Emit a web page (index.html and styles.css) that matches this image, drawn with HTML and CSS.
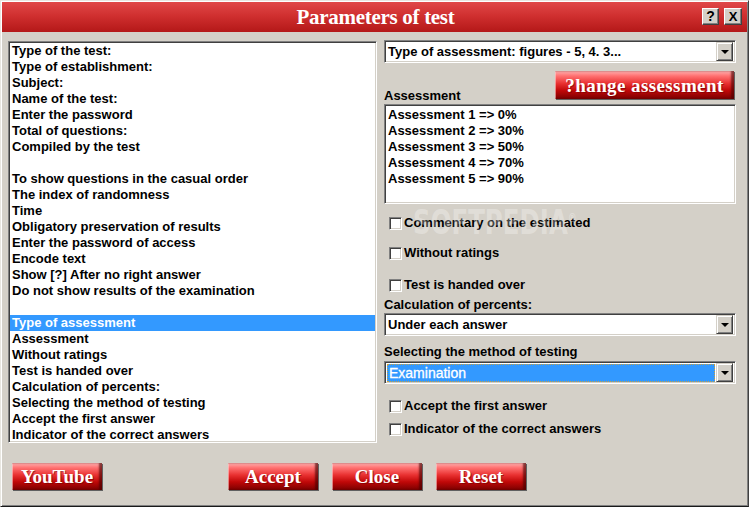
FILE: index.html
```html
<!DOCTYPE html>
<html>
<head>
<meta charset="utf-8">
<link rel="stylesheet" href="styles.css">
</head>
<body>
<div class="window">
  <div class="titlebar">
    <span class="title">Parameters of test</span>
    <div class="tb-buttons">
      <span class="tb-btn">?</span>
      <span class="tb-btn tb-x">X</span>
    </div>
  </div>
  <div class="main">
    <div class="left listbox">
      <div class="li">Type of the test:</div>
      <div class="li">Type of establishment:</div>
      <div class="li">Subject:</div>
      <div class="li">Name of the test:</div>
      <div class="li">Enter the password</div>
      <div class="li">Total of questions:</div>
      <div class="li">Compiled by the test</div>
      <div class="li">&nbsp;</div>
      <div class="li">To show questions in the casual order</div>
      <div class="li">The index of randomness</div>
      <div class="li">Time</div>
      <div class="li">Obligatory preservation of results</div>
      <div class="li">Enter the password of access</div>
      <div class="li">Encode text</div>
      <div class="li">Show [?] After no right answer</div>
      <div class="li">Do not show results of the examination</div>
      <div class="li">&nbsp;</div>
      <div class="li sel">Type of assessment</div>
      <div class="li">Assessment</div>
      <div class="li">Without ratings</div>
      <div class="li">Test is handed over</div>
      <div class="li">Calculation of percents:</div>
      <div class="li">Selecting the method of testing</div>
      <div class="li">Accept the first answer</div>
      <div class="li">Indicator of the correct answers</div>
    </div>
    <div class="right">
      <div class="combo">
        <span class="combo-text">Type of assessment: figures - 5, 4. 3...</span>
        <span class="drop"><span class="arrow"></span></span>
      </div>
      <div class="assess-row">
        <span class="label assess-label">Assessment</span>
        <span class="rbtn change">?hange assessment</span>
      </div>
      <div class="listbox small">
        <div class="li">Assessment 1 =&gt; 0%</div>
        <div class="li">Assessment 2 =&gt; 30%</div>
        <div class="li">Assessment 3 =&gt; 50%</div>
        <div class="li">Assessment 4 =&gt; 70%</div>
        <div class="li">Assessment 5 =&gt; 90%</div>
      </div>
      <div class="check c1"><span class="box"></span>Commentary on the estimated</div>
      <div class="check c2"><span class="box"></span>Without ratings</div>
      <div class="check c3"><span class="box"></span>Test is handed over</div>
      <div class="label l1">Calculation of percents:</div>
      <div class="combo">
        <span class="combo-text">Under each answer</span>
        <span class="drop"><span class="arrow"></span></span>
      </div>
      <div class="label l2">Selecting the method of testing</div>
      <div class="combo c-sel">
        <span class="combo-text focused">Examination</span>
        <span class="drop"><span class="arrow"></span></span>
      </div>
      <div class="check c4"><span class="box"></span>Accept the first answer</div>
      <div class="check c5"><span class="box"></span>Indicator of the correct answers</div>
      <div class="watermark">SOFTPEDIA<sup>®</sup></div>
    </div>
  </div>
  <div class="footer">
    <span class="rbtn fbtn">YouTube</span>
    <span class="rbtn fbtn accept">Accept</span>
    <span class="rbtn fbtn">Close</span>
    <span class="rbtn fbtn">Reset</span>
  </div>
</div>
</body>
</html>
```

FILE: styles.css
```css
html, body {
  margin: 0;
  padding: 0;
  background: #d4d0c8;
}
body {
  width: 749px;
  height: 507px;
  overflow: hidden;
  font-family: "Liberation Sans", Arial, sans-serif;
  font-weight: bold;
  font-size: 13px;
  color: #000;
}
.window {
  box-sizing: border-box;
  width: 749px;
  height: 507px;
  background: #d4d0c8;
  border-style: solid;
  border-width: 1px;
  border-color: #e8e6e0 #404040 #1a1a1a #e8e6e0;
  box-shadow: inset 1px 1px 0 #ffffff, inset -1px -1px 0 #808080;
  display: flex;
  flex-direction: column;
  position: relative;
}
.titlebar {
  height: 30px;
  margin: 1px 1px 0 1px;
  background: linear-gradient(to bottom, #e04848 0%, #d03030 45%, #b41818 100%);
  position: relative;
  display: flex;
  align-items: center;
  justify-content: center;
}
.title {
  font-family: "Liberation Serif", "Times New Roman", serif;
  font-weight: bold;
  font-size: 21px;
  color: #fff;
  letter-spacing: -0.3px;
  margin-left: 2px;
}
.tb-buttons {
  position: absolute;
  right: 5px;
  top: 6px;
  display: flex;
  gap: 5px;
}
.tb-btn {
  box-sizing: border-box;
  width: 17px;
  height: 17px;
  background: #d4d0c8;
  border-style: solid;
  border-width: 1px;
  border-color: #ffffff #404040 #404040 #ffffff;
  box-shadow: inset -1px -1px 0 #808080;
  font-family: "Liberation Sans", Arial, sans-serif;
  font-weight: bold;
  font-size: 14px;
  line-height: 15px;
  text-align: center;
  color: #000;
}
.tb-x {
  width: 18px;
  font-size: 13px;
}
.main {
  display: flex;
  padding: 8px 0 0 7px;
}
.listbox {
  box-sizing: border-box;
  background: #fff;
  border-style: solid;
  border-width: 1px;
  border-color: #808080 #ffffff #ffffff #808080;
  box-shadow: inset 1px 1px 0 #404040, inset -1px -1px 0 #d4d0c8;
  padding: 1px 1px 0 1px;
  overflow: hidden;
}
.li {
  line-height: 16px;
  height: 16px;
  padding-left: 2px;
  white-space: nowrap;
}
.li.sel {
  background: #3399ff;
  color: #fff;
}
.left {
  width: 369px;
  height: 402px;
  margin-top: 1px;
}
.right {
  width: 352px;
  margin-left: 7px;
  display: flex;
  flex-direction: column;
}
.combo {
  box-sizing: border-box;
  height: 23px;
  background: #fff;
  border-style: solid;
  border-width: 1px;
  border-color: #808080 #ffffff #ffffff #808080;
  box-shadow: inset 1px 1px 0 #404040, inset -1px -1px 0 #d4d0c8;
  display: flex;
  align-items: center;
  padding: 2px;
}
.combo-text {
  flex: 1;
  height: 18px;
  line-height: 18px;
  padding-left: 1px;
  white-space: nowrap;
}
.combo-text.focused {
  box-sizing: border-box;
  margin-right: 1px;
  padding-left: 1px;
  background: #3399ff;
  color: #fff;
  border: 1px dotted #c8a040;
  line-height: 16px;
  font-weight: normal;
  font-size: 14px;
  -webkit-text-stroke: 0.3px #fff;
}
.drop {
  box-sizing: border-box;
  width: 17px;
  height: 19px;
  background: #d4d0c8;
  border-style: solid;
  border-width: 1px;
  border-color: #d4d0c8 #404040 #404040 #d4d0c8;
  box-shadow: inset 1px 1px 0 #ffffff, inset -1px -1px 0 #808080;
  display: flex;
  align-items: center;
  justify-content: center;
}
.arrow {
  width: 0;
  height: 0;
  border-left: 4px solid transparent;
  border-right: 4px solid transparent;
  border-top: 4px solid #000;
}
.assess-row {
  margin-top: 8px;
  height: 33px;
  display: flex;
  justify-content: space-between;
}
.assess-label {
  align-self: flex-end;
  line-height: 15px;
}
.rbtn {
  box-sizing: border-box;
  display: inline-flex;
  align-items: center;
  justify-content: center;
  height: 28px;
  font-family: "Liberation Serif", "Times New Roman", serif;
  font-weight: bold;
  font-size: 19px;
  color: #fff;
  text-shadow: 1px 1px 0 rgba(110, 0, 0, 0.55);
  background: linear-gradient(to bottom, #ffb0b0 0%, #ff7070 18%, #e83030 45%, #c00808 70%, #7a0000 100%);
  box-shadow: inset -3px 0 2px rgba(70, 0, 0, 0.65), inset 1px 0 0 rgba(255, 210, 210, 0.6), 1px 1px 0 #606060;
}
.change {
  width: 179px;
  margin-right: 2px;
  letter-spacing: 0.4px;
  padding-top: 1px;
}
.small {
  height: 100px;
  padding-top: 2px;
}
.check {
  height: 16px;
  line-height: 16px;
  display: flex;
  align-items: center;
  padding-left: 5px;
  white-space: nowrap;
}
.box {
  box-sizing: border-box;
  width: 13px;
  height: 13px;
  margin-right: 2px;
  background: #fff;
  border-style: solid;
  border-width: 1px;
  border-color: #808080 #ffffff #ffffff #808080;
  box-shadow: inset 1px 1px 0 #404040, inset -1px -1px 0 #d4d0c8;
}
.c1 { margin-top: 11px; }
.c2 { margin-top: 14px; }
.c3 { margin-top: 16px; }
.c4 { margin-top: 14px; }
.c5 { margin-top: 7px; }
.label {
  line-height: 16px;
  white-space: nowrap;
}
.l1 { margin-top: 4px; }
.l2 { margin-top: 8px; }
.c-sel { margin-top: 1px; }
.watermark {
  position: absolute;
  left: 412px;
  top: 203px;
  font-family: "DejaVu Sans", sans-serif;
  font-weight: bold;
  font-size: 34px;
  line-height: 36px;
  letter-spacing: 0px;
  color: rgba(255, 255, 255, 0.3);
  transform: scaleX(0.72);
  transform-origin: left top;
  pointer-events: none;
  white-space: nowrap;
}
.watermark sup {
  font-size: 12px;
  vertical-align: top;
  position: relative;
  top: -4px;
}
.footer {
  display: flex;
  padding-left: 11px;
  margin-top: 20px;
}
.fbtn {
  width: 90px;
  height: 27px;
  margin-right: 14px;
  font-size: 19px;
  padding-top: 1px;
}
.accept {
  margin-left: 112px;
}
```
